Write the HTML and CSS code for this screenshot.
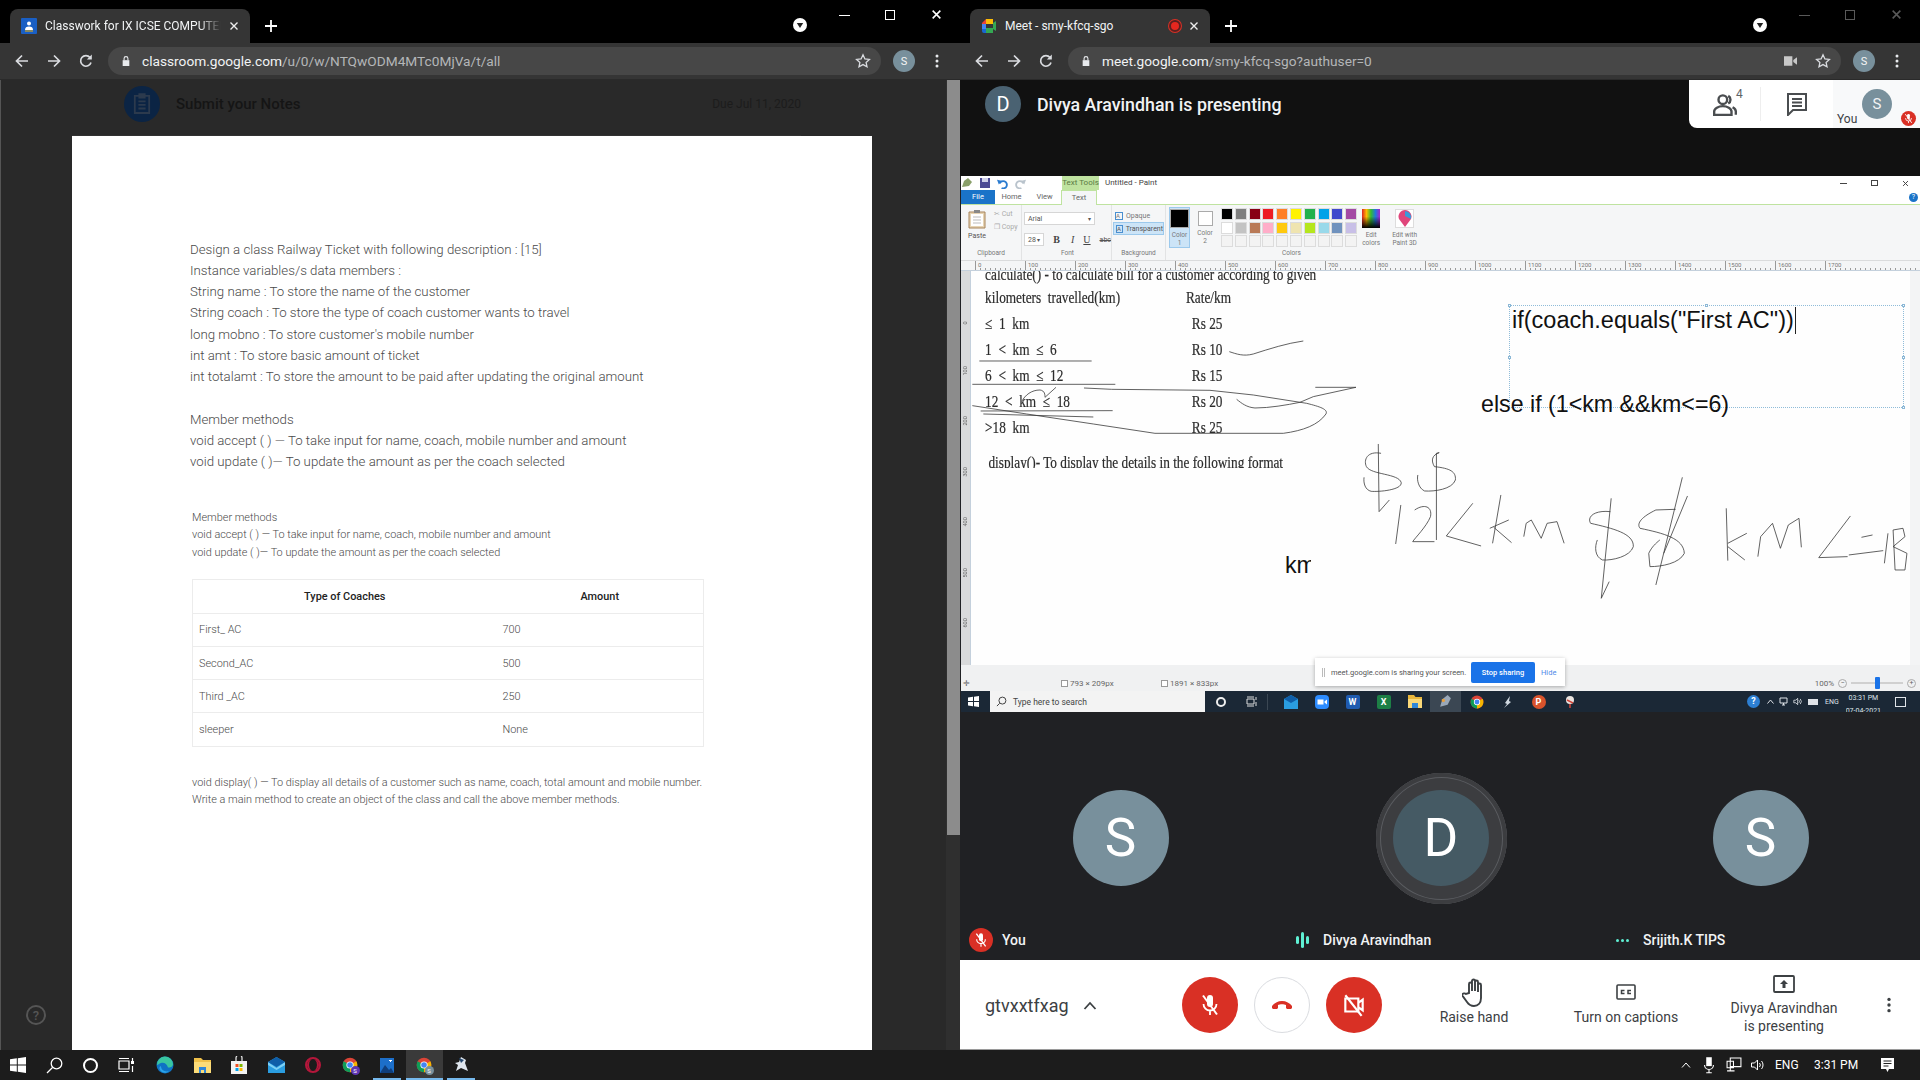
FILE: index.html
```html
<!DOCTYPE html>
<html lang="en"><head>
    <meta charset="utf-8">
    <title>Classwork and Meet</title>
    <link rel="stylesheet" href="styles.css">
</head>
<body>
<svg class="sprites" aria-hidden="true">
    <symbol id="i-back" viewBox="0 0 16 16"><path d="M14 8H3M8 2.5L2.5 8 8 13.5" fill="none" stroke="currentColor" stroke-width="1.7"/></symbol>
    <symbol id="i-forward" viewBox="0 0 16 16"><path d="M2 8h11M8 2.5L13.5 8 8 13.5" fill="none" stroke="currentColor" stroke-width="1.7"/></symbol>
    <symbol id="i-reload" viewBox="0 0 16 16"><path d="M13 9.5A5.3 5.3 0 1 1 12 4.5" fill="none" stroke="currentColor" stroke-width="1.7"/><path d="M13.8 1.5v5h-5z" fill="currentColor"/></symbol>
    <symbol id="i-lock" viewBox="0 0 12 14"><path d="M2 6h8v7H2z" fill="currentColor"/><path d="M3.7 6V4a2.3 2.3 0 0 1 4.600 0v2" fill="none" stroke="currentColor" stroke-width="1.3"/></symbol>
    <symbol id="i-star" viewBox="0 0 16 16"><path d="M8 1.800l1.900 4.100 4.500.5-3.300 3 .9 4.400L8 11.600l-4 2.200.9-4.400-3.300-3 4.500-.5z" fill="none" stroke="currentColor" stroke-width="1.3"/></symbol>
    <symbol id="i-dots" viewBox="0 0 4 16"><circle cx="2" cy="3" r="1.5" fill="currentColor"/><circle cx="2" cy="8" r="1.5" fill="currentColor"/><circle cx="2" cy="13" r="1.5" fill="currentColor"/></symbol>
    <symbol id="i-plus" viewBox="0 0 14 14"><path d="M7 1v12M1 7h12" stroke="currentColor" stroke-width="1.8"/></symbol>
    <symbol id="i-x" viewBox="0 0 10 10"><path d="M1.500 1.500l7 7M8.500 1.500l-7 7" stroke="currentColor" stroke-width="1.4"/></symbol>
    <symbol id="i-media" viewBox="0 0 14 14"><circle cx="7" cy="7" r="7" fill="#fff"/><path d="M3.800 5h6.400L7 10z" fill="#222"/></symbol>
    <symbol id="i-chrome" viewBox="0 0 24 24"><circle cx="12" cy="12" r="11" fill="#db4437"/><path d="M12 12l9.500-5.500A11 11 0 0 1 12 23z" fill="#f4b400"/><path d="M12 12v11A11 11 0 0 1 2.500 6.500z" fill="#0f9d58"/><circle cx="12" cy="12" r="5.4" fill="#fff"/><circle cx="12" cy="12" r="4.2" fill="#4285f4"/></symbol>
    <symbol id="i-mic-off" viewBox="0 0 24 24"><path d="M9 5a3 3 0 0 1 6 0v6a3 3 0 0 1-6 0z" fill="currentColor"/><path d="M5.500 11a6.500 6.500 0 0 0 13 0M12 17.500V22" fill="none" stroke="currentColor" stroke-width="1.8"/><path d="M5 2.500l14 19" stroke="currentColor" stroke-width="2"/></symbol>
</svg>

<div class="desktop">
    <section class="window classroom">
        <div class="tabstrip">
            <div class="tab">
                <svg class="tab-icon" viewBox="0 0 16 16"><rect width="16" height="16" rx="1" fill="#1a5fc4"/><circle cx="8" cy="5.5" r="2" fill="#fff"/><path d="M4 12c0-2.500 1.500-3.500 4-3.500s4 1 4 3.500z" fill="#fff"/><path d="M4 13h8" stroke="#f4b400"/></svg>
                <span class="tab-title fade">Classwork for IX ICSE COMPUTER APPLICATIONS</span>
                <svg class="tab-close"><use href="#i-x"/></svg>
            </div>
            <svg class="new-tab"><use href="#i-plus"/></svg>
            <svg class="media-btn"><use href="#i-media"/></svg>
            <div class="win-btns">
                <span class="win-min"></span><span class="win-max"></span><svg class="win-close"><use href="#i-x"/></svg>
            </div>
        </div>
        <div class="toolbar">
            <svg class="nav"><use href="#i-back"/></svg>
            <svg class="nav"><use href="#i-forward"/></svg>
            <svg class="nav"><use href="#i-reload"/></svg>
            <div class="omnibox">
                <svg class="lock"><use href="#i-lock"/></svg>
                <span class="url"><b>classroom.google.com</b>/u/0/w/NTQwODM4MTc0MjVa/t/all</span>
                <svg class="star"><use href="#i-star"/></svg>
            </div>
            <span class="profile">S</span>
            <svg class="kebab"><use href="#i-dots"/></svg>
        </div>
        <div class="view">
            <div class="view-main">
                <div class="assign-head">
                    <span class="assign-icon">
                        <svg viewBox="0 0 20 24" width="18" height="22"><path d="M2 3h16v19H2zM6 9h8M6 13h8M6 17h8M7 1h6v4H7z" fill="none" stroke="#2c3a4d" stroke-width="2"/></svg>
                    </span>
                    <span class="assign-title">Submit your Notes</span>
                    <span class="assign-due">Due Jul 11, 2020</span>
                </div>
                <div class="paper">
                    <div class="big-text">
                        <p>Design a class Railway Ticket with following description : [15]</p>
                        <p>Instance variables/s data members :</p>
                        <p>String name : To store the name of the customer</p>
                        <p>String coach : To store the type of coach customer wants to travel</p>
                        <p>long mobno : To store customer's mobile number</p>
                        <p>int amt : To store basic amount of ticket</p>
                        <p>int totalamt : To store the amount to be paid after updating the original amount</p>
                        <p>&nbsp;</p>
                        <p>Member methods</p>
                        <p>void accept ( ) — To take input for name, coach, mobile number and amount</p>
                        <p>void update ( )— To update the amount as per the coach selected</p>
                    </div>
                    <div class="small-text">
                        <p>Member methods</p>
                        <p>void accept ( ) — To take input for name, coach, mobile number and amount</p>
                        <p>void update ( )— To update the amount as per the coach selected</p>
                    </div>
                    <table class="coach-table">
                        <tr><th class="col-a">Type of Coaches</th><th>Amount</th></tr>
                        <tr><td>First_ AC</td><td>700</td></tr>
                        <tr><td>Second_AC</td><td>500</td></tr>
                        <tr><td>Third _AC</td><td>250</td></tr>
                        <tr><td>sleeper</td><td>None</td></tr>
                    </table>
                    <div class="small-text after-table">
                        <p>void display( ) — To display all details of a customer such as name, coach, total amount and mobile number.</p>
                        <p>Write a main method to create an object of the class and call the above member methods.</p>
                    </div>
                </div>
                <span class="help">?</span>
            </div>
            <div class="scrollbar"><div class="thumb"></div></div>
        </div>
    </section>

    <section class="window meet">
        <div class="tabstrip">
            <div class="tab">
                <svg class="tab-icon" viewBox="0 0 16 16"><path d="M1 5l4-4v5H1z" fill="#ea4335"/><path d="M5 1h7v5H5z" fill="#fbbc05"/><path d="M1 6h4v5H1z" fill="#4285f4"/><path d="M1 11h4v4H3a2 2 0 0 1-2-2z" fill="#1967d2"/><path d="M5 10h7v5H5z" fill="#34a853"/><path d="M12 5l3-2v10l-3-2z" fill="#34a853"/></svg>
                <span class="tab-title">Meet - smy-kfcq-sgo</span>
                <span class="rec-dot"></span>
                <svg class="tab-close"><use href="#i-x"/></svg>
            </div>
            <svg class="new-tab"><use href="#i-plus"/></svg>
            <svg class="media-btn"><use href="#i-media"/></svg>
            <div class="win-btns dim">
                <span class="win-min"></span><span class="win-max"></span><svg class="win-close"><use href="#i-x"/></svg>
            </div>
        </div>
        <div class="toolbar">
            <svg class="nav"><use href="#i-back"/></svg>
            <svg class="nav"><use href="#i-forward"/></svg>
            <svg class="nav"><use href="#i-reload"/></svg>
            <div class="omnibox">
                <svg class="lock"><use href="#i-lock"/></svg>
                <span class="url"><b>meet.google.com</b>/smy-kfcq-sgo?authuser=0</span>
                <svg class="cam-ind" viewBox="0 0 14 10"><path d="M0 0h9v10H0zM10 4l4-3v8l-4-3z" fill="#c8c8c8"/></svg>
                <svg class="star"><use href="#i-star"/></svg>
            </div>
            <span class="profile">S</span>
            <svg class="kebab"><use href="#i-dots"/></svg>
        </div>

        <div class="meet-top">
            <span class="present-avatar">D</span>
            <span class="present-title">Divya Aravindhan is presenting</span>
            <div class="top-panel">
                <div class="panel-btn">
                    <svg viewBox="0 0 24 24" width="26" height="26"><circle cx="10" cy="8" r="4" fill="none" stroke="#4a4d50" stroke-width="2.2"/><path d="M2 22v-3c0-3 4-5 8-5s8 2 8 5v3z" fill="none" stroke="#4a4d50" stroke-width="2.2"/><path d="M15 4.500a4 4 0 0 1 0 7M19 15c2 1 3 2 3 4v3" fill="none" stroke="#4a4d50" stroke-width="2.2"/></svg>
                    <sup class="people-count">4</sup>
                </div>
                <div class="panel-btn">
                    <svg viewBox="0 0 24 24" width="24" height="24"><path d="M3 2h18v16H8l-5 5z" fill="none" stroke="#4a4d50" stroke-width="2"/><path d="M7 7h10M7 10.500h10M7 14h10" stroke="#4a4d50" stroke-width="1.8"/></svg>
                </div>
                <div class="panel-you">
                    <span class="you-label">You</span>
                    <span class="you-avatar">S</span>
                    <span class="you-mute"><svg width="11" height="11"><use href="#i-mic-off"/></svg></span>
                </div>
            </div>
        </div>

        <div class="shot">
            <div class="p-title">
                <span class="p-quick">
                    <svg width="12" height="12" viewBox="0 0 12 12"><path d="M1 10l2-6 4-3 4 4-3 4z" fill="#8aa06a"/></svg>
                    <svg width="10" height="10" viewBox="0 0 10 10"><path d="M0 0h10v10H0z" fill="#4c4a94"/><path d="M2 0h6v4H2z" fill="#cfd0e8"/></svg>
                    <svg width="11" height="11" viewBox="0 0 12 12"><path d="M3 6a4 4 0 1 1 2 5" fill="none" stroke="#2a7bd0" stroke-width="2"/><path d="M0 2l5 1-3 4z" fill="#2a7bd0"/></svg>
                    <svg width="11" height="11" viewBox="0 0 12 12"><path d="M9 6a4 4 0 1 0-2 5" fill="none" stroke="#b9c3cc" stroke-width="2"/><path d="M12 2L7 3l3 4z" fill="#b9c3cc"/></svg>
                </span>
                <span class="p-tools">Text Tools</span>
                <span class="p-name">Untitled - Paint</span>
                <span class="p-ctrl">
                    <span class="p-min"></span><span class="p-rest"></span>
                    <svg width="7" height="7"><use href="#i-x"/></svg>
                </span>
            </div>
            <div class="p-tabs">
                <span class="p-file">File</span>
                <span class="p-tab">Home</span>
                <span class="p-tab">View</span>
                <span class="p-tab on">Text</span>
                <span class="p-help">?</span>
            </div>
            <div class="ribbon">
                <div class="r-group g-clip">
                    <div class="r-body">
                        <div class="paste">
                            <svg width="18" height="20" viewBox="0 0 18 20"><path d="M1 3h16v16H1z" fill="#e6d4b4" stroke="#a8845a"/><path d="M3 5h12v12H3z" fill="#fff"/><path d="M5 8h8M5 11h8M5 14h8" stroke="#bbb"/><path d="M6 1h6v3H6z" fill="#888"/></svg>
                            <span>Paste</span>
                        </div>
                        <div class="cut-copy">
                            <span>✂ Cut</span>
                            <span>❐ Copy</span>
                        </div>
                    </div>
                    <span class="r-label">Clipboard</span>
                </div>
                <div class="r-group g-font">
                    <div class="r-body col">
                        <span class="fake-select wide">Arial<i>▾</i></span>
                        <div class="font-row">
                            <span class="fake-select narrow">28<i>▾</i></span>
                            <b class="f-b">B</b><i class="f-i">I</i><u class="f-u">U</u><s class="f-s">abc</s>
                        </div>
                    </div>
                    <span class="r-label">Font</span>
                </div>
                <div class="r-group g-bg">
                    <div class="r-body col">
                        <span class="bg-opt"><i>A</i>Opaque</span>
                        <span class="bg-opt on"><i>A</i>Transparent</span>
                    </div>
                    <span class="r-label">Background</span>
                </div>
                <div class="r-group g-colors">
                    <div class="r-body">
                        <div class="color-pick on"><span class="swatch-big black"></span><span>Color<br>1</span></div>
                        <div class="color-pick"><span class="swatch-big white"></span><span>Color<br>2</span></div>
                        <div class="palette">
                            <i class="c01"></i><i class="c02"></i><i class="c03"></i><i class="c04"></i><i class="c05"></i><i class="c06"></i><i class="c07"></i><i class="c08"></i><i class="c09"></i><i class="c10"></i>
                            <i class="c11"></i><i class="c12"></i><i class="c13"></i><i class="c14"></i><i class="c15"></i><i class="c16"></i><i class="c17"></i><i class="c18"></i><i class="c19"></i><i class="c20"></i>
                            <i></i><i></i><i></i><i></i><i></i><i></i><i></i><i></i><i></i><i></i>
                        </div>
                        <div class="edit-colors"><span class="rainbow"></span><span>Edit<br>colors</span></div>
                        <div class="edit-3d">
                            <span class="box-3d"><svg width="16" height="18" viewBox="0 0 16 18"><path d="M8 17L2 9a6.500 6.500 0 1 1 12 0z" fill="#e0457b"/><path d="M8 1a6.500 6.500 0 0 1 6 8L8 6z" fill="#3a9ad9"/></svg></span>
                            <span>Edit with<br>Paint 3D</span>
                        </div>
                    </div>
                    <span class="r-label">Colors</span>
                </div>
            </div>
            <div class="h-ruler">
                <span>0</span><span>100</span><span>200</span><span>300</span><span>400</span><span>500</span><span>600</span><span>700</span><span>800</span><span>900</span><span>1000</span><span>1100</span><span>1200</span><span>1300</span><span>1400</span><span>1500</span><span>1600</span><span>1700</span>
            </div>
            <div class="p-work">
                <div class="v-ruler">
                    <span>0</span><span>100</span><span>200</span><span>300</span><span>400</span><span>500</span><span>600</span><span>700</span>
                </div>
                <div class="canvas">
                    <div class="scan">
                        <div class="scan-row first">calculate() - to calculate bill for a customer according to given</div>
                        <div class="scan-row"><span class="k">kilometers travelled(km)</span><span>Rate/km</span></div>
                        <div class="scan-row"><span class="k">≤ 1 km</span><span class="rs">Rs 25</span></div>
                        <div class="scan-row"><span class="k">1 &lt; km ≤ 6</span><span class="rs">Rs 10</span></div>
                        <div class="scan-row"><span class="k">6 &lt; km ≤ 12</span><span class="rs">Rs 15</span></div>
                        <div class="scan-row"><span class="k">12 &lt; km ≤ 18</span><span class="rs">Rs 20</span></div>
                        <div class="scan-row"><span class="k">&gt;18 km</span><span class="rs">Rs 25</span></div>
                        <div class="scan-row last">display()- To display the details in the following format</div>
                    </div>

                    <svg class="ink" viewBox="971 271 949 394" fill="none" stroke="#3a3a3a" stroke-width=".8">
                        <g transform="translate(960 270) scale(.3333)">
                            <path vector-effect="non-scaling-stroke" d="M58 273H395M37 343H466M62 423L458 422M70 432L400 441"/>
                            <path vector-effect="non-scaling-stroke" d="M808 245C830 252 850 260 880 252C930 236 980 220 1030 213"/>
                            <path vector-effect="non-scaling-stroke" d="M372 354L455 358L750 361L880 375L1040 400C1080 410 1105 418 1098 432C1075 465 1030 482 970 490H585L400 462L200 432L37 407"/>
                            <path vector-effect="non-scaling-stroke" d="M830 388C845 400 860 412 885 414C930 414 980 405 1020 397L1060 380L1188 352H1066"/>
                            <path vector-effect="non-scaling-stroke" d="M185 395C195 375 215 360 240 360C255 362 255 375 255 382L288 352"/>
                        </g>
                        <g transform="translate(1300 290) scale(.3954 .3333)">
                            <path vector-effect="non-scaling-stroke" d="M205 490C170 482 160 510 168 530C180 555 250 550 256 578C258 600 200 606 180 604C165 600 160 580 162 562"/>
                            <path vector-effect="non-scaling-stroke" d="M198 462L200 665L226 630"/>
                            <path vector-effect="non-scaling-stroke" d="M345 750V490L352 488C335 495 330 510 340 530C380 535 395 545 393 570C385 598 340 605 315 603C300 595 295 570 298 555"/>
                            <path vector-effect="non-scaling-stroke" d="M255 645L242 762"/>
                            <path vector-effect="non-scaling-stroke" d="M290 660C315 640 335 650 330 680C320 710 290 745 285 755L340 755"/>
                            <path vector-effect="non-scaling-stroke" d="M437 640L370 738L458 768"/>
                            <path vector-effect="non-scaling-stroke" d="M508 615L487 760M480 715L528 690M490 712L535 758"/>
                            <path vector-effect="non-scaling-stroke" d="M566 740L572 700L585 690L610 745L625 700L650 695L668 760"/>
                            <path vector-effect="non-scaling-stroke" d="M787 625L762 925L782 875"/>
                            <path vector-effect="non-scaling-stroke" d="M785 665C745 660 725 680 735 700C790 715 845 730 843 770C835 800 790 812 765 810C745 800 745 770 752 750"/>
                            <path vector-effect="non-scaling-stroke" d="M967 562L900 885M980 618L920 790"/>
                            <path vector-effect="non-scaling-stroke" d="M950 658L900 660C865 680 850 700 860 715C920 730 970 745 972 790C960 820 915 830 885 830L882 790C890 770 900 760 910 750"/>
                            <path vector-effect="non-scaling-stroke" d="M1078 655L1082 812M1082 760L1130 730M1082 770L1125 810"/>
                            <path vector-effect="non-scaling-stroke" d="M1158 800L1165 740L1195 700L1215 775L1235 705L1262 685L1268 772"/>
                            <path vector-effect="non-scaling-stroke" d="M1392 678L1312 803L1385 800M1388 795L1475 782M1420 742L1448 735"/>
                            <path vector-effect="non-scaling-stroke" d="M1478 820L1487 730M1500 720L1505 840L1530 840L1535 790L1500 770L1530 740L1525 715L1500 720"/>
                        </g>
                    </svg>

                    <div class="textbox">
                        <span class="tb-text">if(coach.equals("First AC"))</span>
                        <i class="hd h1"></i><i class="hd h2"></i><i class="hd h3"></i><i class="hd h4"></i><i class="hd h5"></i><i class="hd h6"></i>
                    </div>
                    <span class="typed typed-else">else if (1&lt;km &amp;&amp;km&lt;=6)</span>
                    <span class="typed typed-km">km</span>
                </div>
            </div>
            <div class="p-status">
                <span class="st-move">✛</span>
                <span class="st-sel"><i class="st-box"></i>793 × 209px</span>
                <span class="st-size"><i class="st-box"></i>1891 × 833px</span>
                <span class="st-zoom">100% <i class="z-btn">−</i><span class="z-track"><i class="z-knob"></i></span><i class="z-btn">+</i></span>
            </div>
            <div class="share-bar">
                <span class="share-grip"></span>
                <span class="share-msg">meet.google.com is sharing your screen.</span>
                <span class="share-stop">Stop sharing</span>
                <span class="share-hide">Hide</span>
            </div>
            <div class="inner-bar">
                <svg class="ib-start" width="11" height="11" viewBox="0 0 11 11"><path d="M0 1.500l5-.7V5H0zM6 .7L11 0v5H6zM0 6h5v4.200l-5-.7zM6 6h5v5l-5-.7z" fill="#fff"/></svg>
                <div class="ib-search">
                    <svg width="11" height="11" viewBox="0 0 12 12"><circle cx="7" cy="5" r="3.8" fill="none" stroke="#333"/><path d="M4 8l-3 3" stroke="#333"/></svg>
                    <span>Type here to search</span>
                </div>
                <span class="ib-slot"><span class="ib-ring"></span></span>
                <span class="ib-slot"><svg width="11" height="11" viewBox="0 0 11 11"><path d="M1 3h7v5H1zM1 1h7M1 10h7M10 1v3M10 6v4" fill="none" stroke="#ddd"/></svg></span>
                <span class="ib-sep"></span>
                <span class="ib-slot"><svg width="14" height="14" viewBox="0 0 14 14"><path d="M0 4l7-4 7 4v10H0z" fill="#2a9de0"/><path d="M0 4l7-4 7 4-7 4z" fill="#0f5ea8"/></svg></span>
                <span class="ib-slot"><svg width="14" height="14" viewBox="0 0 14 14"><rect width="14" height="14" rx="4" fill="#2d8cff"/><path d="M2.500 4.500h6v5h-6zM9.500 6.500l2.500-2v5l-2.500-2z" fill="#fff"/></svg></span>
                <span class="ib-slot"><span class="tb-letter word">W</span></span>
                <span class="ib-slot"><span class="tb-letter excel">X</span></span>
                <span class="ib-slot"><svg width="14" height="13" viewBox="0 0 14 13"><path d="M0 0h6l1.500 2H14v11H0z" fill="#e8b63c"/><path d="M0 4h14v9H0z" fill="#f8d878"/><path d="M4 13V8h6v5z" fill="#2f87d8"/></svg></span>
                <span class="ib-slot active"><svg width="15" height="15" viewBox="0 0 14 14"><path d="M2 12l2-7 5-4 3 3-3 6z" fill="#9aa8b8"/><circle cx="5" cy="6" r="1.5" fill="#e8a03c"/></svg></span>
                <span class="ib-slot"><svg width="14" height="14"><use href="#i-chrome"/></svg></span>
                <span class="ib-slot"><svg width="14" height="14" viewBox="0 0 14 14"><path d="M9 1L4 8l2 1-3 4 7-6-2-1z" fill="#cfd8e0"/></svg></span>
                <span class="ib-slot"><span class="tb-letter ppt">P</span></span>
                <span class="ib-slot"><svg width="14" height="14" viewBox="0 0 14 14"><circle cx="7" cy="5" r="4" fill="#e9e4e0"/><path d="M7 9v4M4 5l6 3" stroke="#d2453a" stroke-width="1.5"/></svg></span>
                <div class="ib-tray">
                    <span class="ib-help">?</span>
                    <svg width="7" height="5" viewBox="0 0 7 5"><path d="M.5 4.500L3.500 1l3 3.500" fill="none" stroke="#dfe3e8"/></svg>
                    <svg width="9" height="10" viewBox="0 0 9 10"><path d="M1 1h7v5H1zM3 8h3M4.500 6v2" fill="none" stroke="#dfe3e8"/></svg>
                    <svg width="10" height="9" viewBox="0 0 15 14"><path d="M1 5h3l3-3v10L4 9H1zM9 5a3 3 0 0 1 0 4M11 3a6 6 0 0 1 0 8" fill="none" stroke="#dfe3e8" stroke-width="1.3"/></svg>
                    <svg width="10" height="8" viewBox="0 0 10 8"><path d="M0 1h10v6H0z" fill="#dfe3e8"/></svg>
                    <span class="ib-lang">ENG</span>
                    <span class="ib-clock">03:31 PM<br>07-04-2021</span>
                    <span class="ib-notif"></span>
                </div>
            </div>
        </div>

        <div class="tiles">
            <div class="tile">
                <div class="tile-stage"><span class="avatar light">S</span></div>
                <div class="tile-name">
                    <span class="tile-ind muted"><svg width="16" height="16"><use href="#i-mic-off"/></svg></span>
                    <span>You</span>
                </div>
            </div>
            <div class="tile">
                <div class="tile-stage"><span class="speaking"><span class="avatar dark">D</span></span></div>
                <div class="tile-name">
                    <span class="tile-ind"><span class="eq"><i></i><i class="tall"></i><i></i></span></span>
                    <span>Divya Aravindhan</span>
                </div>
            </div>
            <div class="tile">
                <div class="tile-stage"><span class="avatar light">S</span></div>
                <div class="tile-name">
                    <span class="tile-ind"><span class="eq flat"><i></i><i></i><i></i></span></span>
                    <span>Srijith.K TIPS</span>
                </div>
            </div>
        </div>

        <div class="controls">
            <div class="code-box">
                <span class="code">gtvxxtfxag</span>
                <svg width="14" height="9" viewBox="0 0 14 9"><path d="M1.500 8L7 2l5.500 6" fill="none" stroke="#3c4043" stroke-width="1.8"/></svg>
            </div>
            <div class="call-btns">
                <span class="round red"><svg width="24" height="24"><use href="#i-mic-off"/></svg></span>
                <span class="round hang">
                    <svg width="24" height="24" viewBox="0 0 24 24"><path d="M2 15v-2c2-3 6-5 10-5s8 2 10 5v2l-1 1h-4l-1-1v-3c-2-1-6-1-8 0v3l-1 1H3z" fill="#d93025"/></svg>
                </span>
                <span class="round red">
                    <svg width="26" height="26" viewBox="0 0 24 24"><path d="M4 6h12v12H4zM16 10l4-3v10l-4-3" fill="none" stroke="#fff" stroke-width="2"/><path d="M4 3l15 19" stroke="#fff" stroke-width="2"/></svg>
                </span>
            </div>
            <div class="action raise">
                <svg width="24" height="30" viewBox="0 0 24 30"><path d="M7 15V6a1.500 1.500 0 0 1 3 0v7V3a1.500 1.500 0 0 1 3 0v10V4a1.500 1.500 0 0 1 3 0v10V7a1.500 1.500 0 0 1 3 0v13c0 5-3 8-7 8-3 0-5-1-7-4l-5-7c1-2 3-2 4-1z" fill="none" stroke="#3c4043" stroke-width="1.9"/></svg>
                <span>Raise hand</span>
            </div>
            <div class="action captions">
                <svg width="20" height="16" viewBox="0 0 20 16"><rect x="1" y="1" width="18" height="14" rx="1" fill="none" stroke="#3c4043" stroke-width="1.6"/><path d="M8.500 6.500h-3v3h3M15 6.500h-3v3h3" fill="none" stroke="#3c4043" stroke-width="1.5"/></svg>
                <span>Turn on captions</span>
            </div>
            <div class="action presenting">
                <svg width="22" height="18" viewBox="0 0 22 18"><rect x="1" y="1" width="20" height="16" rx="1" fill="none" stroke="#3c4043" stroke-width="1.8"/><path d="M11 5l4 4h-2.500v4h-3V9H7z" fill="#3c4043"/></svg>
                <span>Divya Aravindhan<br>is presenting</span>
            </div>
            <svg class="more"><use href="#i-dots"/></svg>
        </div>
    </section>
</div>

<div class="taskbar">
    <span class="tb-slot sm"><svg width="16" height="16" viewBox="0 0 16 16"><path d="M0 2.300l6.800-1V7.500H0zM7.800 1.200L16 0v7.500H7.800zM0 8.500h6.800v6.200l-6.800-1zM7.800 8.500H16V16l-8.200-1.200z" fill="#fff"/></svg></span>
    <span class="tb-slot sm"><svg width="17" height="17" viewBox="0 0 17 17"><circle cx="10.5" cy="6.5" r="5.3" fill="none" stroke="#fff" stroke-width="1.3"/><path d="M6.500 10.500L1 16" stroke="#fff" stroke-width="1.3"/></svg></span>
    <span class="tb-slot sm"><span class="cortana"></span></span>
    <span class="tb-slot sm"><svg width="16" height="16" viewBox="0 0 16 16"><path d="M1 4h10v8H1zM1 1.500h10M1 14.500h10M14.500 1v5M14.500 9v6" fill="none" stroke="#fff" stroke-width="1.2"/><path d="M13 4h3v3h-3z" fill="#fff"/></svg></span>
    <span class="tb-gap"></span>
    <span class="tb-slot"><svg width="18" height="18" viewBox="0 0 18 18"><circle cx="9" cy="9" r="8.5" fill="#0f73c4"/><path d="M1 9a8 8 0 0 1 16-1c0 3-3 3.500-5 3.500C11 8 8 6 5 7c-2 .7-3 2-4 2z" fill="#39c6a0"/><path d="M5 10c0 4 4 6.500 8 5-3 3-7 2-9-1-1-2-1-3 1-4z" fill="#2ba4e8"/></svg></span>
    <span class="tb-slot"><svg width="17" height="15" viewBox="0 0 17 15"><path d="M0 0h7l2 2h8v13H0z" fill="#f0c14a"/><path d="M0 4h17v11H0z" fill="#fcdc78"/><path d="M5 15V9h7v6h-2v-3H7v3z" fill="#2f87d8"/></svg></span>
    <span class="tb-slot"><svg width="16" height="18" viewBox="0 0 16 18"><path d="M0 5h16v13H0z" fill="#f2f2f2"/><path d="M5 5V2a3 3 0 0 1 6 0v3" fill="none" stroke="#eee" stroke-width="1.2"/><path d="M4.500 8h3v3h-3z" fill="#f25022"/><path d="M8.500 8h3v3h-3z" fill="#7fba00"/><path d="M4.500 12h3v3h-3z" fill="#00a4ef"/><path d="M8.500 12h3v3h-3z" fill="#ffb900"/></svg></span>
    <span class="tb-slot"><svg width="17" height="16" viewBox="0 0 17 16"><path d="M0 5l8.500-5L17 5v11H0z" fill="#2a9de0"/><path d="M0 5l8.500 6L17 5v3l-8.500 5L0 8z" fill="#7dd0f5"/><path d="M0 5l8.500-5L17 5l-8.500 5z" fill="#0f5ea8"/></svg></span>
    <span class="tb-slot"><span class="opera"></span></span>
    <span class="tb-slot"><svg width="16" height="16"><use href="#i-chrome"/></svg><i class="tb-badge purple">S</i></span>
    <span class="tb-slot running"><svg width="14" height="15" viewBox="0 0 14 15"><path d="M0 0h14v15H0z" fill="#1d6fc9"/><path d="M0 15l5-8 4 5 2-2 3 5z" fill="#103f7c"/><path d="M9 2h3v1h-1v1h-1V3H9z" fill="#fff"/></svg></span>
    <span class="tb-slot active"><svg width="16" height="16"><use href="#i-chrome"/></svg><i class="tb-badge grey">S</i></span>
    <span class="tb-slot running"><svg width="14" height="16" viewBox="0 0 14 16"><path d="M7 0l5 3-1 3 3 8-7-3-5 3 2-6-3-2 4-1z" fill="#dfe6ee"/><path d="M5 1l5 2-3 3z" fill="#24476e"/></svg></span>
    <div class="tray">
        <svg class="t-chev" width="10" height="6" viewBox="0 0 10 6"><path d="M1 5.500L5 1l4 4.500" fill="none" stroke="#fff"/></svg>
        <svg class="t-mic" width="10" height="18" viewBox="0 0 9 16"><path d="M2 1h5v8H2z" fill="#fff"/><path d="M0.500 8a4 4 0 0 0 8 0M4.500 12v3M2 15h5" fill="none" stroke="#fff"/></svg>
        <svg class="t-net" width="16" height="16" viewBox="0 0 15 15"><path d="M4 1h10v8H4zM1 4h6v6H1zM4 10v3M1 13h7" fill="none" stroke="#fff"/></svg>
        <svg class="t-vol" width="16" height="14" viewBox="0 0 15 14"><path d="M1 5h3l3-3v10L4 9H1zM9 5a3 3 0 0 1 0 4M11 3a6 6 0 0 1 0 8" fill="none" stroke="#fff"/></svg>
        <span class="tray-lang">ENG</span>
        <span class="tray-time">3:31 PM</span>
        <svg class="tray-notif" width="15" height="15" viewBox="0 0 15 15"><path d="M1 0h13v11H9l-1.500 3L6 11H1z" fill="#fff"/><path d="M3.500 3h8M3.500 5.500h8M3.500 8h5" stroke="#222"/></svg>
    </div>
</div>
</body></html>
```

FILE: styles.css
```css
* {
    box-sizing: border-box;
}

html, body {
    margin: 0;
    height: 100%;
}

body {
    display: flex;
    flex-direction: column;
    width: 1920px;
    height: 1080px;
    overflow: hidden;
    font-family: Roboto, "Liberation Sans", sans-serif;
    background-color: #1c1c1c;
}

svg {
    display: block;
}

.sprites {
    display: none;
}

.desktop {
    display: flex;
    height: 1050px;
}

.window {
    display: flex;
    flex-direction: column;
    width: 960px;
    height: 100%;
}

/* chrome */
.tabstrip {
    display: flex;
    flex: none;
    height: 43px;
    padding: 9px 0 0 10px;
    background-color: #000;
}

.tab {
    display: flex;
    align-items: center;
    width: 240px;
    height: 34px;
    padding: 0 11px;
    border-radius: 8px 8px 0 0;
    background-color: #353535;
    color: #f1f3f4;
}

.tab-icon {
    flex: none;
    width: 16px;
    height: 16px;
}

.tab-title {
    flex: 1;
    min-width: 0;
    margin-left: 8px;
    overflow: hidden;
    white-space: nowrap;
    font-size: 12px;
}

.tab-title.fade {
    -webkit-mask-image: linear-gradient(90deg, #000 88%, transparent);
    mask-image: linear-gradient(90deg, #000 88%, transparent);
}

.tab-close {
    flex: none;
    width: 10px;
    height: 10px;
    margin-left: 8px;
    color: #eee;
}

.rec-dot {
    flex: none;
    width: 12px;
    height: 12px;
    border: 2px solid #5a2020;
    border-radius: 50%;
    background-color: #e5271f;
    box-shadow: 0 0 0 1px #d93025;
}

.new-tab {
    flex: none;
    width: 14px;
    height: 14px;
    margin: 10px 0 0 14px;
    color: #fff;
}

.media-btn {
    flex: none;
    width: 14px;
    height: 14px;
    margin: 9px 0 0 515px;
}

.win-btns {
    display: flex;
    align-items: flex-start;
    margin-left: auto;
    height: 16px;
    margin-top: -1px;
    color: #fff;
}

.win-btns.dim {
    opacity: .35;
}

.win-min {
    width: 11px;
    height: 1px;
    margin: 7px 35px 0 0;
    background-color: currentColor;
}

.win-max {
    width: 10px;
    height: 10px;
    margin-top: 2px;
    border: 1px solid currentColor;
}

.win-close {
    width: 11px;
    height: 11px;
    margin: 1px 18px 0 36px;
}

.toolbar {
    display: flex;
    flex: none;
    align-items: center;
    height: 37px;
    padding-left: 14px;
    background-color: #353535;
    border-bottom: 1px solid #2a2a2a;
    color: #dadce0;
}

.nav {
    flex: none;
    width: 16px;
    height: 16px;
    margin-right: 16px;
}

.nav:nth-child(3) {
    margin-right: 14px;
}

.omnibox {
    display: flex;
    align-items: center;
    width: 773px;
    height: 28px;
    padding: 0 10px 0 13px;
    border-radius: 14px;
    background-color: #474747;
}

.lock {
    flex: none;
    width: 10px;
    height: 12px;
    color: #e8eaed;
}

.url {
    margin-left: 11px;
    font-size: 13.7px;
    color: #b4b6b8;
    white-space: nowrap;
}

.url b {
    font-weight: 400;
    color: #f1f3f4;
}

.cam-ind {
    width: 13px;
    height: 10px;
    margin-left: auto;
}

.star {
    flex: none;
    width: 16px;
    height: 16px;
    margin-left: auto;
}

.cam-ind + .star {
    margin-left: 18px;
}

.profile {
    display: flex;
    flex: none;
    align-items: center;
    justify-content: center;
    width: 22px;
    height: 22px;
    margin-left: 12px;
    border-radius: 50%;
    background-color: #78909c;
    color: #f5f5f5;
    font-size: 11px;
}

.kebab {
    flex: none;
    width: 4px;
    height: 16px;
    margin-left: 20px;
    color: #e8eaed;
}

/* left window page */
.view {
    display: flex;
    flex: 1;
    min-height: 0;
    border-left: 1px solid #555;
    background-color: #292929;
}

.view-main {
    display: flex;
    position: relative;
    flex-direction: column;
    flex: 1;
    min-width: 0;
}

.assign-head {
    display: flex;
    flex: none;
    align-items: center;
    height: 56px;
    margin: 0 145px 0 71px;
    padding: 0 0 0 53px;
    border-bottom: 1px solid #323232;
}

.assign-icon {
    display: flex;
    align-items: center;
    justify-content: center;
    width: 36px;
    height: 36px;
    margin: -8px 0 0 -1px;
    border-radius: 50%;
    background-color: #0b2444;
}

.assign-title {
    margin: -8px 0 0 16px;
    font-size: 15px;
    font-weight: 500;
    color: #151515;
}

.assign-due {
    margin: -8px 0 0 auto;
    font-size: 12px;
    color: #1c1c1c;
}

.paper {
    flex: 1;
    width: 800px;
    margin-left: 71px;
    padding: 102.5px 0 0 118px;
    background-color: #fff;
    color: #4a4a4a;
    font-weight: 300;
    overflow: hidden;
}

.paper p {
    margin: 0;
    white-space: nowrap;
}

.big-text {
    font-size: 13.25px;
    line-height: 21.3px;
}

.small-text {
    margin: 36px 0 0 2px;
    font-size: 10.9px;
    line-height: 17.5px;
}

.after-table {
    margin-top: 27px;
}

.coach-table {
    width: 512px;
    margin: 18px 0 0 2px;
    border-collapse: collapse;
    border: 1px solid #ececec;
    font-size: 10.9px;
}

.coach-table th,
.coach-table td {
    height: 33.3px;
    padding: 0 6px;
    border-bottom: 1px solid #ececec;
    text-align: left;
    font-weight: 300;
}

.coach-table td:first-child,
.coach-table th.col-a {
    width: 304px;
}

.coach-table th {
    text-align: center;
    font-weight: 500;
    color: #222;
}

.help {
    display: flex;
    position: absolute;
    left: 25px;
    top: 925px;
    align-items: center;
    justify-content: center;
    width: 20px;
    height: 20px;
    border: 2px solid #555;
    border-radius: 50%;
    font-size: 13px;
    font-weight: 500;
    color: #555;
}

.scrollbar {
    flex: none;
    width: 14px;
    padding-left: 1px;
    background-color: #2f2f2f;
}

.thumb {
    height: 755px;
    background-color: #8c8c8c;
}

/* right window */
.meet {
    background-color: #202124;
}

.meet-top {
    display: flex;
    flex: none;
    height: 96px;
    padding-left: 25px;
    background-color: #111;
}

.present-avatar {
    display: flex;
    flex: none;
    align-items: center;
    justify-content: center;
    width: 36px;
    height: 36px;
    margin-top: 6px;
    border-radius: 50%;
    background-color: #4a6272;
    color: #fff;
    font-size: 20px;
}

.present-title {
    margin: 14px 0 0 16px;
    font-size: 17.8px;
    font-weight: 500;
    color: #f1f3f4;
}

.top-panel {
    display: flex;
    flex: none;
    align-items: center;
    width: 231px;
    height: 48px;
    margin-left: auto;
    border-radius: 0 0 0 8px;
    background-color: #fff;
    overflow: hidden;
}

.panel-btn {
    display: flex;
    position: relative;
    align-items: center;
    justify-content: center;
    width: 72px;
    height: 34px;
}

.panel-btn:first-child {
    border-right: 1px solid #eee;
}

.people-count {
    position: absolute;
    left: 47px;
    top: 0;
    font-size: 12px;
    color: #5f6368;
}

.panel-you {
    display: flex;
    position: relative;
    align-items: center;
    height: 100%;
    margin-left: auto;
    width: 87px;
    background-color: #f8f9fa;
}

.you-label {
    position: absolute;
    left: 4px;
    bottom: 2px;
    font-size: 12px;
    color: #3c4043;
}

.you-avatar {
    display: flex;
    position: absolute;
    left: 29px;
    top: 9px;
    align-items: center;
    justify-content: center;
    width: 30px;
    height: 30px;
    border-radius: 50%;
    background-color: #78909c;
    color: #f1f3f4;
    font-size: 15px;
}

.you-mute {
    display: flex;
    position: absolute;
    right: 4px;
    bottom: 2px;
    align-items: center;
    justify-content: center;
    width: 15px;
    height: 15px;
    border-radius: 50%;
    background-color: #d93025;
    color: #fff;
}

/* shared screen */
.shot {
    display: flex;
    position: relative;
    flex: none;
    flex-direction: column;
    height: 536px;
    margin-left: 1px;
    background-color: #f5f6f7;
    color: #555;
    font-size: 7px;
    overflow: hidden;
}

.p-title {
    display: flex;
    flex: none;
    align-items: flex-start;
    height: 14px;
    background-color: #fff;
    font-size: 8px;
}

.p-quick {
    display: flex;
    align-items: center;
    gap: 7px;
    width: 101px;
    height: 14px;
}

.p-tools {
    width: 37px;
    height: 14px;
    background-color: #bfe3a0;
    color: #5b7a45;
    text-align: center;
    line-height: 13px;
}

.p-name {
    margin-left: 6px;
    line-height: 14px;
    color: #444;
}

.p-ctrl {
    display: flex;
    align-items: center;
    gap: 24px;
    height: 14px;
    margin-left: auto;
    padding-right: 11px;
    color: #444;
}

.p-min {
    width: 7px;
    height: 1px;
    background-color: #444;
}

.p-rest {
    width: 7px;
    height: 6px;
    border: 1px solid #444;
}

.p-tabs {
    display: flex;
    position: relative;
    flex: none;
    align-items: stretch;
    height: 15px;
    border-bottom: 1px solid #bfe3a0;
    background-color: #fff;
    font-size: 7.5px;
    line-height: 14px;
}

.p-file {
    width: 34px;
    background-color: #1a73c8;
    color: #fff;
    text-align: center;
}

.p-tab {
    width: 33px;
    text-align: center;
    color: #666;
}

.p-tab.on {
    width: 36px;
    height: 15px;
    border: 1px solid #bfe3a0;
    border-bottom: 0;
    background-color: #f5f6f7;
}

.p-help {
    position: absolute;
    right: 2px;
    top: 3px;
    width: 9px;
    height: 9px;
    border-radius: 50%;
    background-color: #1a73c8;
    color: #fff;
    font-size: 7px;
    line-height: 9px;
    text-align: center;
}

.ribbon {
    display: flex;
    flex: none;
    height: 56px;
    border-bottom: 1px solid #dadbdc;
    background-color: #f5f6f7;
}

.r-group {
    display: flex;
    flex: none;
    flex-direction: column;
    border-right: 1px solid #e2e3e4;
}

.r-body {
    display: flex;
    flex: 1;
    min-height: 0;
}

.r-body.col {
    flex-direction: column;
}

.r-label {
    flex: none;
    height: 12px;
    font-size: 6.5px;
    line-height: 11px;
    text-align: center;
    color: #777;
}

.g-clip {
    width: 61px;
}

.paste {
    display: flex;
    flex-direction: column;
    align-items: center;
    gap: 3px;
    width: 28px;
    padding-top: 4px;
    margin-left: 2px;
}

.cut-copy {
    display: flex;
    flex-direction: column;
    gap: 5px;
    padding: 5px 0 0 3px;
    color: #aaa;
    white-space: nowrap;
}

.g-font {
    width: 90px;
    padding-left: 2px;
}

.fake-select {
    display: flex;
    align-items: center;
    justify-content: space-between;
    height: 13px;
    padding: 0 3px;
    border: 1px solid #d6d6d6;
    background-color: #fff;
}

.fake-select i {
    font-style: normal;
    font-size: 6px;
}

.fake-select.wide {
    width: 71px;
    margin-top: 7px;
}

.fake-select.narrow {
    width: 25px;
}

.font-row {
    display: flex;
    align-items: center;
    margin-top: 8px;
}

.f-b, .f-i, .f-u {
    margin-left: 9px;
    font-family: "Liberation Serif", serif;
    font-size: 10px;
    color: #444;
}

.f-i {
    margin-left: 11px;
}

.f-s {
    margin-left: 9px;
    color: #555;
}

.g-bg {
    width: 54px;
    padding: 4px 1px 0;
}

.bg-opt {
    display: flex;
    align-items: center;
    gap: 3px;
    height: 13px;
    padding-left: 2px;
    white-space: nowrap;
    color: #777;
}

.bg-opt i {
    width: 8px;
    height: 8px;
    border: 1px solid #4a8fd0;
    font-size: 6px;
    font-style: normal;
    line-height: 6px;
}

.bg-opt.on {
    background-color: #cce4f7;
    border: 1px solid #9cc9ec;
    color: #555;
}

.g-colors {
    width: 251px;
    border-right: 0;
}

.color-pick {
    display: flex;
    flex-direction: column;
    align-items: center;
    gap: 3px;
    width: 26px;
    height: 41px;
    margin: 2px 3px 0;
    padding-top: 2px;
    font-size: 6.5px;
    line-height: 8px;
    text-align: center;
    color: #777;
}

.color-pick.on {
    background-color: #cce4f7;
    border: 1px solid #9cc9ec;
    padding-top: 1px;
}

.swatch-big {
    flex: none;
    width: 15px;
    height: 15px;
    border: 1px solid #aaa;
}

.swatch-big.black {
    width: 19px;
    height: 19px;
    background-color: #000;
}

.swatch-big.white {
    background-color: #fff;
    margin-top: 2px;
}

.palette {
    display: grid;
    grid-template-columns: repeat(10, 12px);
    grid-auto-rows: 12px;
    gap: 1.5px 1.8px;
    margin: 3px 0 0 4px;
}

.palette i {
    border: 1px solid #dcdcdc;
    background-color: #f3f3f3;
}

.palette .c01 { background-color: #000; }
.palette .c02 { background-color: #7f7f7f; }
.palette .c03 { background-color: #880015; }
.palette .c04 { background-color: #ed1c24; }
.palette .c05 { background-color: #ff7f27; }
.palette .c06 { background-color: #fff200; }
.palette .c07 { background-color: #22b14c; }
.palette .c08 { background-color: #00a2e8; }
.palette .c09 { background-color: #3f48cc; }
.palette .c10 { background-color: #a349a4; }
.palette .c11 { background-color: #fff; }
.palette .c12 { background-color: #c3c3c3; }
.palette .c13 { background-color: #b97a57; }
.palette .c14 { background-color: #ffaec9; }
.palette .c15 { background-color: #ffc90e; }
.palette .c16 { background-color: #efe4b0; }
.palette .c17 { background-color: #b5e61d; }
.palette .c18 { background-color: #99d9ea; }
.palette .c19 { background-color: #7092be; }
.palette .c20 { background-color: #c8bfe7; }

.edit-colors {
    display: flex;
    flex-direction: column;
    align-items: center;
    gap: 3px;
    width: 26px;
    margin: 3px 0 0 5px;
    padding-top: 1px;
    font-size: 6.5px;
    line-height: 8px;
    text-align: center;
    color: #777;
}

.rainbow {
    width: 18px;
    height: 19px;
    background: linear-gradient(#0000 40%, #000), linear-gradient(90deg, #d22, #fb0, #3b3, #27d, #a2c);
}

.edit-3d {
    display: flex;
    flex-direction: column;
    align-items: center;
    gap: 3px;
    width: 30px;
    margin: 3px 0 0 12px;
    padding-top: 1px;
    font-size: 6.5px;
    line-height: 8px;
    text-align: center;
    white-space: nowrap;
    color: #777;
}

.box-3d {
    display: flex;
    align-items: center;
    justify-content: center;
    width: 19px;
    height: 19px;
    border: 1px solid #ddd;
    background-color: #fff;
}

.h-ruler {
    display: flex;
    flex: none;
    height: 10px;
    padding-left: 14px;
    background-color: #f4f5f6;
    background-image: repeating-linear-gradient(90deg, #9a9a9a 0 1px, transparent 1px 5px);
    background-size: 100% 2px;
    background-position: 14px bottom;
    background-repeat: no-repeat;
    border-bottom: 1px solid #c4d0dc;
    overflow: hidden;
}

.h-ruler span {
    flex: none;
    width: 50px;
    padding-left: 2px;
    border-left: 1px solid #999;
    font-size: 6px;
    line-height: 8px;
    color: #777;
}

.p-work {
    display: flex;
    flex: none;
    height: 394px;
}

.v-ruler {
    display: flex;
    flex: none;
    flex-direction: column;
    width: 10px;
    padding-top: 3px;
    background-color: #d9dadb;
    border-right: 1px solid #c4d0dc;
    overflow: hidden;
}

.v-ruler span {
    flex: none;
    height: 50.5px;
    writing-mode: vertical-rl;
    transform: rotate(180deg);
    font-size: 5.5px;
    line-height: 9px;
    text-align: left;
    color: #666;
}

.canvas {
    position: relative;
    flex: 1;
    min-width: 0;
    background-color: #fefefe;
    border-right: 10px solid #f3f4f5;
    overflow: hidden;
}

/* the scanned question is tall and narrow, so the row is squeezed sideways */
.scan {
    width: 120%;
    margin-top: -9px;
    padding-left: 17px;
    font-family: "Liberation Serif", serif;
    font-size: 16px;
    color: #2c2c2c;
    -webkit-text-stroke: .2px #2c2c2c;
    transform: scaleX(.83);
    transform-origin: left top;
    filter: blur(.35px);
}

.scan-row {
    display: flex;
    height: 26px;
    line-height: 26px;
    white-space: nowrap;
}

.scan-row.first {
    height: 23px;
}

.scan-row.last {
    height: 18px;
    margin: 9px 0 0 4px;
    overflow: hidden;
}

.scan-row .k {
    flex: none;
    width: 242px;
    word-spacing: 4px;
}

.scan-row .rs {
    margin-left: 7px;
}

.ink {
    position: absolute;
    left: 0;
    top: 0;
    width: 949px;
    height: 394px;
}

.textbox {
    position: absolute;
    left: 538px;
    top: 34px;
    width: 395px;
    height: 103px;
    border: 1px dotted #8fbcd9;
}

.tb-text {
    position: absolute;
    left: 2px;
    top: 1px;
    padding-right: 1px;
    border-right: 1px solid #222;
    font-family: "Liberation Sans", sans-serif;
    font-size: 23.5px;
    line-height: 27px;
    color: #111;
    white-space: nowrap;
}

.hd {
    position: absolute;
    width: 3px;
    height: 3px;
    background-color: #fff;
    border: 1px solid #8cb8d6;
}

.h1 { left: -2px; top: -2px; }
.h2 { left: 195px; top: -2px; }
.h3 { right: -2px; top: -2px; }
.h4 { left: -2px; top: 50px; }
.h5 { right: -2px; top: 50px; }
.h6 { right: -2px; bottom: -2px; }

.typed {
    position: absolute;
    font-family: "Liberation Sans", sans-serif;
    font-size: 23.2px;
    line-height: 27px;
    color: #111;
    white-space: nowrap;
}

.typed-else {
    left: 510px;
    top: 120px;
}

.typed-km {
    left: 314px;
    top: 281px;
    width: 26px;
    overflow: hidden;
}

.p-status {
    display: flex;
    flex: none;
    align-items: center;
    height: 26px;
    padding-top: 10px;
    background-color: #f0f1f2;
    font-size: 8px;
    color: #666;
}

.st-move {
    width: 100px;
    padding-left: 2px;
}

.st-sel,
.st-size {
    display: flex;
    align-items: center;
    gap: 2px;
    width: 100px;
}

.st-box {
    width: 7px;
    height: 7px;
    border: 1px solid #999;
    background-color: #fff;
}

.st-zoom {
    display: flex;
    align-items: center;
    gap: 4px;
    margin-left: auto;
    padding-right: 4px;
}

.z-btn {
    width: 9px;
    height: 9px;
    border: 1px solid #aaa;
    border-radius: 50%;
    font-style: normal;
    font-size: 7px;
    line-height: 7px;
    text-align: center;
}

.z-track {
    position: relative;
    width: 52px;
    height: 2px;
    background-color: #d0d0d0;
}

.z-knob {
    position: absolute;
    left: 24px;
    top: -5px;
    width: 5px;
    height: 12px;
    background-color: #1a73e8;
    border-radius: 1px;
}

.share-bar {
    display: flex;
    position: absolute;
    left: 354px;
    top: 482px;
    align-items: center;
    width: 250px;
    height: 28px;
    padding-left: 7px;
    background-color: #fff;
    box-shadow: 0 1px 4px rgba(0, 0, 0, .3);
    font-size: 7.5px;
    color: #555;
}

.share-grip {
    width: 3px;
    height: 9px;
    margin-right: 6px;
    border-left: 1px solid #bbb;
    border-right: 1px solid #bbb;
}

.share-msg {
    width: 141px;
    white-space: nowrap;
}

.share-stop {
    width: 64px;
    height: 21px;
    margin-left: -1px;
    border-radius: 2px;
    background-color: #1a73e8;
    color: #fff;
    line-height: 21px;
    text-align: center;
    font-weight: 500;
}

.share-hide {
    margin-left: 6px;
    color: #4f8ae8;
}

.inner-bar {
    display: flex;
    flex: none;
    align-items: center;
    height: 21px;
    background-color: #1b2836;
    color: #dfe3e8;
    font-size: 8px;
}

.ib-start {
    margin: 0 11px 0 7px;
}

.ib-search {
    display: flex;
    align-items: center;
    gap: 6px;
    width: 215px;
    height: 21px;
    padding-left: 6px;
    background-color: #f3f3f3;
    color: #444;
    font-size: 8.5px;
}

.ib-slot {
    display: flex;
    flex: none;
    align-items: center;
    justify-content: center;
    width: 31px;
    height: 21px;
}

.ib-slot.active {
    background-color: #3b4753;
}

.ib-ring {
    width: 10px;
    height: 10px;
    border: 2px solid #eee;
    border-radius: 50%;
}

.ib-sep {
    flex: none;
    width: 1px;
    height: 16px;
    margin-right: 7px;
    background-color: #3b4753;
}

.tb-letter {
    width: 14px;
    height: 14px;
    border-radius: 2px;
    color: #fff;
    font-size: 9px;
    font-weight: 700;
    line-height: 14px;
    text-align: center;
}

.tb-letter.word { background-color: #1f5bb0; }
.tb-letter.excel { background-color: #1d7f46; }
.tb-letter.ppt { background-color: #d9532c; border-radius: 50%; }

.ib-tray {
    display: flex;
    align-items: center;
    gap: 5px;
    margin-left: auto;
    padding-right: 14px;
    font-size: 7px;
    white-space: nowrap;
}

.ib-help {
    width: 13px;
    height: 13px;
    margin-right: 2px;
    border-radius: 50%;
    background-color: #2d7fd3;
    color: #fff;
    font-size: 9px;
    font-weight: 700;
    line-height: 13px;
    text-align: center;
}

.ib-lang {
    margin-left: 2px;
}

.ib-clock {
    height: 21px;
    margin: 0 9px 0 2px;
    padding-top: 1px;
    overflow: hidden;
    line-height: 13px;
    text-align: center;
}

.ib-notif {
    width: 11px;
    height: 10px;
    border: 1px solid #dfe3e8;
}

/* participant tiles */
.tiles {
    display: grid;
    flex: none;
    grid-template-columns: 321px 320px 319px;
    height: 248px;
    background-color: #202124;
}

.tile {
    display: flex;
    flex-direction: column;
}

.tile-stage {
    display: flex;
    flex: 1;
    align-items: center;
    justify-content: center;
    padding-top: 44px;
    min-height: 0;
}

.avatar {
    display: flex;
    flex: none;
    align-items: center;
    justify-content: center;
    width: 96px;
    height: 96px;
    border-radius: 50%;
    color: #fff;
    font-size: 53px;
}

.avatar.light {
    background-color: #78909c;
}

.avatar.dark {
    background-color: #455a64;
}

.speaking {
    display: flex;
    align-items: center;
    justify-content: center;
    width: 131px;
    height: 131px;
    border-radius: 50%;
    background-color: #3c3d40;
    box-shadow: inset 0 0 0 4px #3c3d40, inset 0 0 0 5px #5a5c60;
}

.tile-name {
    display: flex;
    flex: none;
    align-items: center;
    gap: 9px;
    height: 40px;
    padding-left: 9px;
    color: #f1f3f4;
    font-size: 14px;
    font-weight: 500;
}

.tile-ind {
    display: flex;
    flex: none;
    align-items: center;
    justify-content: center;
    width: 24px;
    height: 24px;
    border-radius: 50%;
    color: #fff;
}

.tile-ind.muted {
    background-color: #d93025;
}

.eq {
    display: flex;
    align-items: center;
    gap: 2px;
}

.eq i {
    width: 3px;
    height: 8px;
    border-radius: 2px;
    background-color: #5ff0d4;
}

.eq .tall {
    height: 16px;
}

.eq.flat i {
    height: 3px;
}

/* bottom controls */
.controls {
    display: flex;
    flex: 1;
    align-items: center;
    min-height: 0;
    padding-left: 25px;
    border-top: 1px solid #fff;
    border-bottom: 1px solid #9a9a9a;
    background-color: #fff;
    color: #3c4043;
}

.code-box {
    display: flex;
    flex: none;
    align-items: center;
    gap: 14px;
    width: 197px;
}

.code {
    font-size: 18px;
}

.call-btns {
    display: flex;
    flex: none;
    gap: 16px;
}

.round {
    display: flex;
    align-items: center;
    justify-content: center;
    width: 56px;
    height: 56px;
    border-radius: 50%;
    color: #fff;
}

.round.red {
    background-color: #d93025;
}

.round.hang {
    border: 1px solid #dadce0;
    background-color: #fff;
}

.action {
    display: flex;
    flex: none;
    flex-direction: column;
    align-items: center;
    font-size: 14px;
    line-height: 18px;
    text-align: center;
    white-space: nowrap;
}

.raise {
    width: 120px;
    margin: -6px 0 0 32px;
}

.captions {
    width: 184px;
    gap: 8px;
}

.presenting {
    width: 132px;
    gap: 6px;
}

.more {
    flex: none;
    width: 6px;
    height: 18px;
    margin-left: 36px;
    color: #3c4043;
}

/* windows taskbar */
.taskbar {
    display: flex;
    flex: none;
    align-items: center;
    height: 30px;
    background-color: #1c1c1c;
    color: #fff;
}

.tb-slot {
    display: flex;
    position: relative;
    flex: none;
    align-items: center;
    justify-content: center;
    width: 37px;
    height: 30px;
}

.tb-slot.sm {
    width: 36px;
}

.tb-slot.active {
    background-color: #3a3a3a;
    box-shadow: inset 0 -2px 0 #76b9ed;
}

.tb-slot.running::after {
    content: "";
    position: absolute;
    left: 4px;
    right: 5px;
    bottom: 0;
    height: 2px;
    background-color: #76b9ed;
}

.tb-gap {
    flex: none;
    width: 2.5px;
}

.tb-badge {
    position: absolute;
    right: 9px;
    bottom: 5px;
    width: 9px;
    height: 9px;
    border-radius: 50%;
    font-size: 6px;
    font-style: normal;
    line-height: 9px;
    text-align: center;
    color: #fff;
}

.tb-badge.purple { background-color: #5e35b1; }
.tb-badge.grey { background-color: #78909c; }

.cortana {
    width: 15px;
    height: 15px;
    border: 2.5px solid #fff;
    border-radius: 50%;
}

.opera {
    width: 16px;
    height: 16px;
    border: 2px solid #b5173b;
    border-radius: 50%;
    box-shadow: inset 4px 0 0 -2px #b5173b, inset -4px 0 0 -2px #b5173b;
}

.tray {
    display: flex;
    align-items: center;
    margin-left: auto;
    padding-right: 25px;
    font-size: 12px;
}

.t-mic { margin-left: 13px; }
.t-net { margin-left: 12px; }
.t-vol { margin-left: 8px; }

.tray-lang {
    width: 24px;
    margin-left: 9px;
    white-space: nowrap;
}

.tray-time {
    width: 43px;
    margin-left: 15px;
    white-space: nowrap;
}

.tray-notif {
    margin-left: 23px;
}
```
